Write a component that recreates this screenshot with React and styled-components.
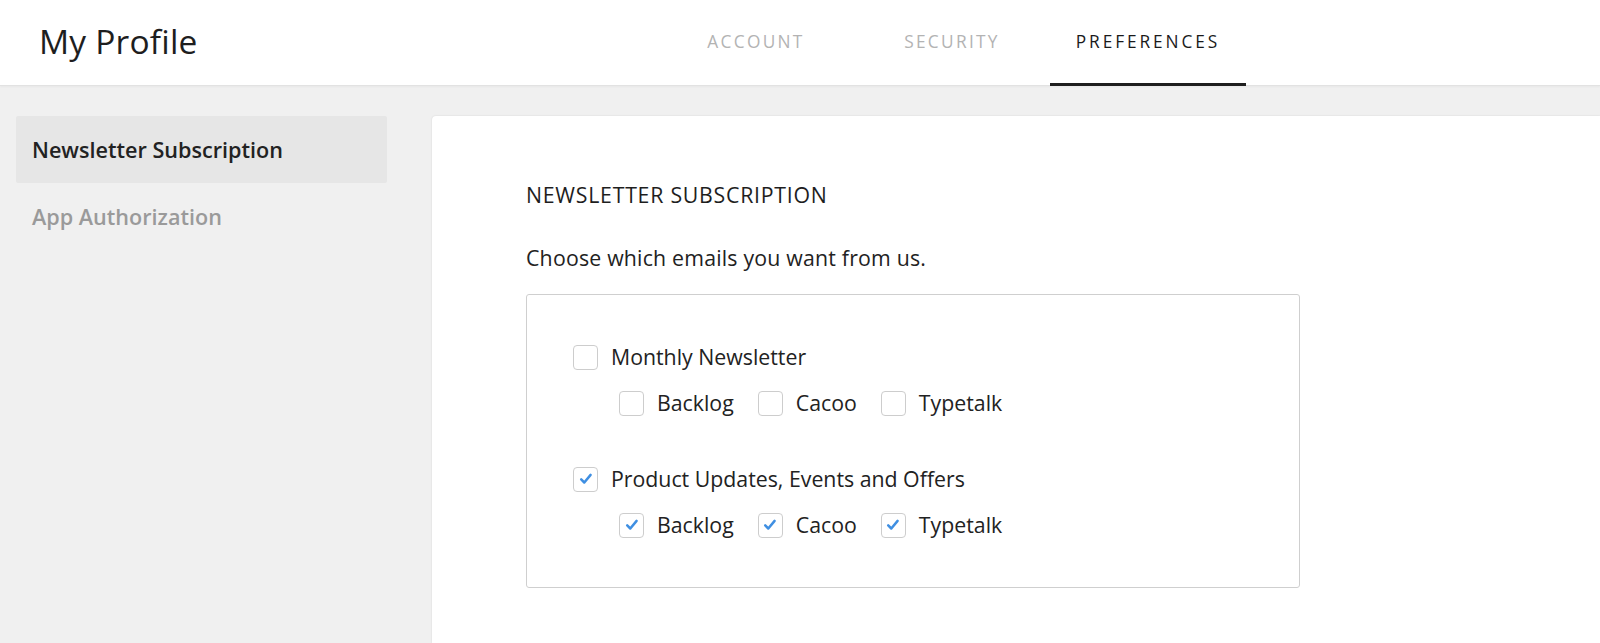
import React from "react";
import styled, { createGlobalStyle } from "styled-components";

const GlobalStyle = createGlobalStyle`
  html, body {
    margin: 0;
    padding: 0;
    background: #f0f0f0;
    font-family: "Open Sans", "Noto Sans", sans-serif;
    color: #222;
  }
`;

const groups = [
  { title: "Monthly Newsletter", checked: false },
  { title: "Product Updates, Events and Offers", checked: true },
];
const products = ["Backlog", "Cacoo", "Typetalk"];

function Check({ checked }) {
  return (
    <Box>
      {checked && (
        <svg width="14" height="12" viewBox="0 0 14 12">
          <path d="M2.2 6.4l3.1 3.1 6.3-7.6" fill="none" stroke="#3f8fe2" strokeWidth="2.5" strokeLinecap="round" strokeLinejoin="round" />
        </svg>
      )}
    </Box>
  );
}

export default function App() {
  return (
    <>
      <GlobalStyle />
      <Header>
        <Title>My Profile</Title>
        <Tabs>
          <Tab>ACCOUNT</Tab>
          <Tab>SECURITY</Tab>
          <Tab $active>PREFERENCES</Tab>
        </Tabs>
      </Header>
      <Body>
        <Sidebar>
          <NavItem $active>Newsletter Subscription</NavItem>
          <NavItem>App Authorization</NavItem>
        </Sidebar>
        <Card>
          <Heading>NEWSLETTER SUBSCRIPTION</Heading>
          <Lead>Choose which emails you want from us.</Lead>
          <Options>
            {groups.map((g) => (
              <Group key={g.title}>
                <Option>
                  <Check checked={g.checked} />
                  {g.title}
                </Option>
                <SubRow>
                  {products.map((p) => (
                    <Option key={p}>
                      <Check checked={g.checked} />
                      {p}
                    </Option>
                  ))}
                </SubRow>
              </Group>
            ))}
          </Options>
        </Card>
      </Body>
    </>
  );
}

const Header = styled.header`
  display: grid;
  grid-template-columns: 658px auto;
  height: 85px;
  background: #fff;
  border-bottom: 1px solid #e2e2e2;
  box-shadow: 0 1px 2px rgba(0, 0, 0, 0.04);
`;

const Title = styled.h1`
  margin: 0 0 3px;
  padding-left: 39px;
  align-self: center;
  font-size: 33.5px;
  font-weight: 400;
  color: #1e1e1e;
  letter-spacing: 0.2px;
`;

const Tabs = styled.nav`
  display: flex;
`;

const Tab = styled.div`
  width: 196px;
  display: flex;
  align-items: center;
  justify-content: center;
  box-sizing: border-box;
  font-size: 17.3px;
  letter-spacing: ${(p) => (p.$active ? "2.9px" : "2.3px")};
  color: ${(p) => (p.$active ? "#1a1a1a" : "#b3b3b3")};
  font-weight: ${(p) => (p.$active ? 500 : 400)};
  border-bottom: 3px solid ${(p) => (p.$active ? "#1e1e1e" : "transparent")};
  margin-bottom: -1px;
`;

const Body = styled.div`
  display: flex;
  align-items: flex-start;
  padding-top: 30px;
`;

const Sidebar = styled.aside`
  width: 371px;
  margin-left: 16px;
  margin-right: 45px;
  display: flex;
  flex-direction: column;
`;

const NavItem = styled.div`
  height: 67px;
  display: flex;
  align-items: center;
  padding-left: 16px;
  font-size: 21.6px;
  font-weight: 600;
  color: ${(p) => (p.$active ? "#222" : "#9a9a9a")};
  background: ${(p) => (p.$active ? "#e6e6e6" : "transparent")};
  border-radius: 2px;
`;

const Card = styled.main`
  flex: 1;
  box-sizing: border-box;
  height: 527px;
  background: #fff;
  border-radius: 4px 0 0 0;
  box-shadow: 0 0 2px rgba(0, 0, 0, 0.12);
  padding: 64px 0 0 94px;
`;

const Heading = styled.h2`
  margin: 0;
  font-size: 21.3px;
  line-height: 29px;
  font-weight: 500;
  letter-spacing: 0.75px;
  color: #1e1e1e;
`;

const Lead = styled.p`
  margin: 34px 0 22px;
  font-size: 21.3px;
  line-height: 29px;
  color: #222;
  letter-spacing: 0.2px;
`;

const Options = styled.div`
  width: 774px;
  box-sizing: border-box;
  border: 1px solid #cfcfcf;
  border-radius: 3px;
  padding: 49px 46px 49px;
  display: flex;
  flex-direction: column;
  gap: 50px;
`;

const Group = styled.div`
  display: flex;
  flex-direction: column;
  gap: 20px;
`;

const SubRow = styled.div`
  display: flex;
  gap: 24px;
  padding-left: 46px;
`;

const Option = styled.label`
  display: flex;
  align-items: center;
  gap: 13px;
  font-size: 21.3px;
  color: #222;
  line-height: 26px;
`;

const Box = styled.span`
  width: 25px;
  height: 25px;
  box-sizing: border-box;
  border: 1px solid #cdcdcd;
  border-radius: 4px;
  background: #fff;
  display: flex;
  align-items: center;
  justify-content: center;
  flex-shrink: 0;
`;
